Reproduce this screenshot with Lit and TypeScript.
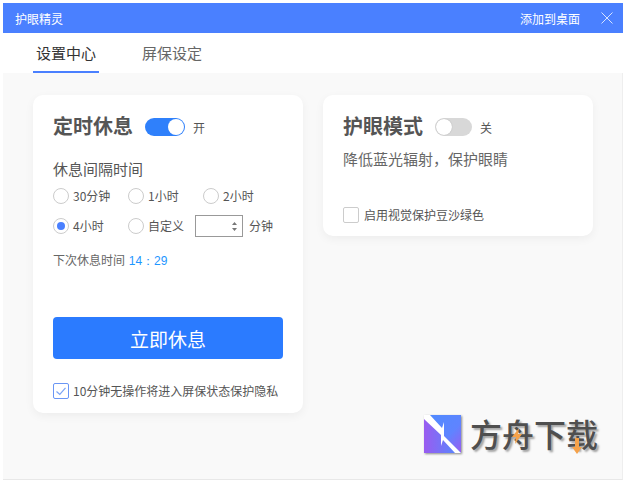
import { LitElement, html, css } from 'lit';
import { customElement } from 'lit/decorators.js';

const closeIcon = html`<svg width="12" height="12" viewBox="0 0 12 12" fill="none" stroke="#d5e2ff" stroke-width="1"><path d="M.5.5l11 11M11.5.5l-11 11"/></svg>`;
const checkIcon = html`<svg width="16" height="16" viewBox="0 0 16 16" fill="none" stroke="#7ba4f5" stroke-width="1.2"><path d="M3.5 8.5 6.8 11.5 12.5 4.8"/></svg>`;
const spinIcon = html`<svg width="5" height="9" viewBox="0 0 5 9" fill="#777"><path d="M2.500 0 5 3H0zM2.500 9 0 6h5z"/></svg>`;

@customElement('app-root')
export class AppRoot extends LitElement {
  static styles = css`
    :host {
      display: block;
      width: 627px;
      height: 483px;
      box-sizing: border-box;
      padding: 3px 4px 3px 3px;
      background: #fff;
      font-family: "Noto Sans CJK SC", "Liberation Sans", sans-serif;
      color: #555;
    }
    .window {
      position: relative;
      height: 100%;
      display: flex;
      flex-direction: column;
      overflow: hidden;
    }
    .titlebar {
      height: 30px;
      flex: none;
      display: flex;
      align-items: center;
      padding: 0 10px 0 12px;
      background: #4a80ff;
      color: #fff;
      font-size: 12px;
    }
    .titlebar .add { margin-left: auto; margin-right: 21px; }
    .titlebar svg { display: block; }
    .tabs {
      height: 40px;
      flex: none;
      display: flex;
      padding-left: 30px;
      gap: 40px;
      background: #fff;
      box-sizing: border-box;
      font-size: 15px;
    }
    .tab {
      width: 66px;
      box-sizing: border-box;
      display: flex;
      align-items: center;
      justify-content: center;
      color: #666;
      border-bottom: 2px solid transparent;
      white-space: nowrap;
    }
    .tab.on { color: #333; border-bottom-color: #4a80ff; }
    .main {
      flex: 1;
      display: flex;
      align-items: flex-start;
      gap: 20px;
      padding: 22px 30px 0;
      background: #f9f9f9;
      border-right: 1px solid #eee;
      border-bottom: 1px solid #e8e8e8;
    }
    .card {
      flex: none;
      width: 270px;
      box-sizing: border-box;
      background: #fff;
      border-radius: 10px;
      box-shadow: 0 3px 10px rgba(0, 0, 0, 0.05);
      padding: 18px 20px 0;
      display: flex;
      flex-direction: column;
    }
    .left { height: 318px; }
    .right { height: 141px; }
    .head { display: flex; align-items: center; height: 28px; }
    .head h2 {
      margin: 0 12px 2px 0;
      font-size: 20px;
      line-height: 28px;
      font-weight: 700;
      color: #555;
    }
    .head span { font-size: 12px; color: #555; margin-left: 8px; }
    .switch {
      width: 40px;
      height: 18px;
      border-radius: 9px;
      background: #2f80fb;
      position: relative;
    }
    .switch::after {
      content: "";
      position: absolute;
      top: 1px;
      right: 1px;
      width: 16px;
      height: 16px;
      border-radius: 50%;
      background: #fff;
    }
    .switch.off { width: 37px; background: #d8d8d8; }
    .switch.off::after {
      right: auto;
      left: 1px;
      box-shadow: 0 0 1px rgba(0, 0, 0, 0.3);
    }
    .label { margin-top: 17px; font-size: 15px; line-height: 22px; color: #555; }
    .options {
      margin-top: 8px;
      display: grid;
      grid-template-columns: 75px 75px 1fr;
      grid-auto-rows: 16px;
      row-gap: 14px;
      font-size: 12px;
    }
    .opt { display: flex; align-items: center; gap: 4px; white-space: nowrap; line-height: 16px; }
    .radio {
      width: 16px;
      height: 16px;
      flex: none;
      box-sizing: border-box;
      border: 1px solid #ccc;
      border-radius: 50%;
      background: #fff;
      display: flex;
      align-items: center;
      justify-content: center;
    }
    .radio.on::after {
      content: "";
      width: 8px;
      height: 8px;
      border-radius: 50%;
      background: #4a80ff;
    }
    .opt.custom { gap: 0; grid-column: span 2; }
    .custom .radio { margin-right: 4px; }
    .num {
      width: 48px;
      height: 22px;
      flex: none;
      box-sizing: border-box;
      margin: 0 6px 0 11px;
      border: 1px solid #999;
      display: flex;
      align-items: center;
      justify-content: flex-end;
      padding-right: 5px;
    }
    .num svg { display: block; }
    .next { margin-top: 18px; font-size: 12px; line-height: 16px; color: #666; }
    .next b {
      font-family: "Liberation Sans", sans-serif;
      font-weight: 400;
      color: #1e96ff;
      margin-left: 1px;
      font-size: 12px;
    }
    .rest {
      margin-top: 48px;
      height: 42px;
      border-radius: 4px;
      background: #2b7bff;
      color: #fff;
      font-size: 19px;
      display: flex;
      align-items: center;
      justify-content: center;
    }
    .check { display: flex; align-items: center; gap: 4px; font-size: 12px; line-height: 16px; color: #555; }
    .left .check { margin-top: 24px; }
    .right .check { margin-top: 37px; gap: 5px; }
    .box {
      width: 16px;
      height: 16px;
      flex: none;
      box-sizing: border-box;
      border: 1px solid #ccc;
      border-radius: 2px;
      background: #fff;
      position: relative;
    }
    .box svg { position: absolute; left: -1px; top: -1px; }
    .box.on { border-color: #6a96f5; }
    .desc { margin-top: 7px; font-size: 15px; line-height: 22px; color: #666; }
    .mark {
      position: absolute;
      left: 421px;
      top: 412px;
      display: flex;
      align-items: center;
      gap: 9px;
    }
    .mark .logo { display: block; filter: drop-shadow(1px 1px 1px rgba(0, 0, 0, 0.45)); }
    .mark .name {
      position: relative;
      margin-top: -2px;
      font-size: 32px;
      line-height: 38px;
      font-weight: 500;
      color: #4f4f4f;
      text-shadow: 2px 2px 2px rgba(0, 0, 0, 0.35);
      white-space: nowrap;
    }
    .mark .bolt { position: absolute; left: 42px; top: 14px; }
    .mark .arrow { position: absolute; left: 102px; top: 24px; }
  `;

  render() {
    return html`
      <div class="window">
        <div class="titlebar">
          <span>护眼精灵</span>
          <span class="add">添加到桌面</span>
          ${closeIcon}
        </div>
        <div class="tabs">
          <div class="tab on">设置中心</div>
          <div class="tab">屏保设定</div>
        </div>
        <div class="main">
          <section class="card left">
            <div class="head">
              <h2>定时休息</h2>
              <div class="switch"></div>
              <span>开</span>
            </div>
            <div class="label">休息间隔时间</div>
            <div class="options">
              <label class="opt"><i class="radio"></i>30分钟</label>
              <label class="opt"><i class="radio"></i>1小时</label>
              <label class="opt"><i class="radio"></i>2小时</label>
              <label class="opt"><i class="radio on"></i>4小时</label>
              <label class="opt custom">
                <i class="radio"></i>自定义
                <div class="num">${spinIcon}</div>
                分钟
              </label>
            </div>
            <div class="next">下次休息时间 <b>14：29</b></div>
            <div class="rest">立即休息</div>
            <label class="check">
              <i class="box on">${checkIcon}</i>10分钟无操作将进入屏保状态保护隐私
            </label>
          </section>
          <section class="card right">
            <div class="head">
              <h2>护眼模式</h2>
              <div class="switch off"></div>
              <span>关</span>
            </div>
            <div class="desc">降低蓝光辐射，保护眼睛</div>
            <label class="check"><i class="box"></i>启用视觉保护豆沙绿色</label>
          </section>
        </div>
        <div class="mark">
          <svg class="logo" width="37" height="38" viewBox="0 0 37 38">
            <defs>
              <linearGradient id="la" x1="0" y1="0" x2="1" y2="0">
                <stop offset="0" stop-color="#9a5cf0" />
                <stop offset="1" stop-color="#4f8cff" />
              </linearGradient>
              <linearGradient id="lb" x1="0" y1="0" x2="1" y2="1">
                <stop offset="0" stop-color="#4f8cff" />
                <stop offset="0.6" stop-color="#5f84ff" />
                <stop offset="1" stop-color="#9a5cf0" />
              </linearGradient>
            </defs>
            <rect width="37" height="38" fill="url(#la)" />
            <path d="M0 0h37v38z" fill="url(#lb)" />
            <path d="M0 0h6L18 13l2-6V21L37 38H31L19 25l-2 6V20L0 4z" fill="#fff" />
          </svg>
          <div class="name">
            方舟下载
            <svg class="bolt" width="10" height="16" viewBox="0 0 10 16" fill="#f5a24a"><path d="M7 0 0 9h4l-1 7 7-10H6z"/></svg>
            <svg class="arrow" width="10" height="16" viewBox="0 0 10 16" fill="#f5a24a"><path d="M3 0h4v9h3l-5 7-5-7h3z"/></svg>
          </div>
        </div>
      </div>
    `;
  }
}
